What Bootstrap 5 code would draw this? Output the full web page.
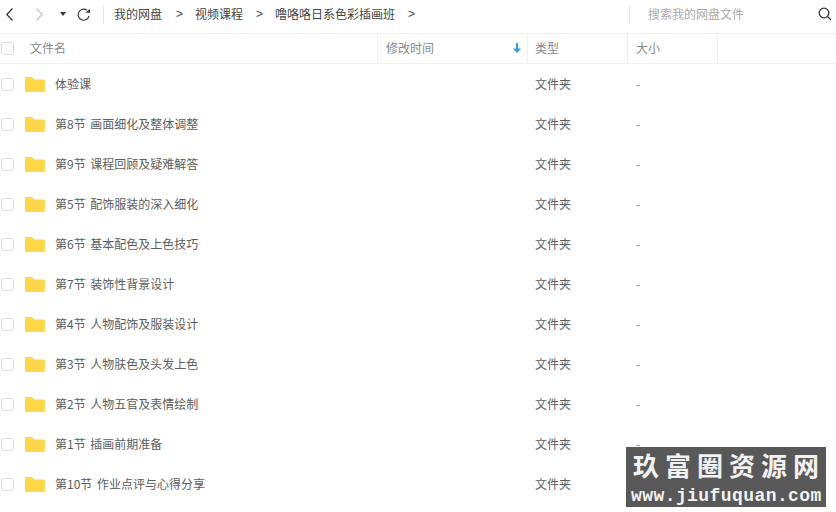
<!DOCTYPE html>
<html lang="zh">
<head>
<meta charset="utf-8">
<title>我的网盘</title>
<link href="https://cdn.jsdelivr.net/npm/bootstrap@5.3.0/dist/css/bootstrap.min.css" rel="stylesheet">
<style>
html,body{height:512px;overflow:hidden;background:#fff}
body{font-family:"Noto Sans CJK SC","Liberation Sans",sans-serif;font-size:12px;color:#5c5c5c;position:relative}
.topbar{height:34px;border-bottom:1px solid #f0f0f0;padding-bottom:5px}
.back-wrap{padding-left:6px}
.gap-fwd{margin-left:23px}
.gap-drop{margin-left:17px}
.gap-ref{margin-left:11px;margin-right:13px}
.tb-sep{width:1px;height:17px;background:#e6e6e6;flex:none}
.crumbs{color:#444;padding-left:10px}
.crumb-gt{font-family:"Liberation Sans",sans-serif;color:#444;margin-right:12px}
.crumb-name{margin-right:14px}
.crumb-last{margin-right:13px}
.search-zone{width:206px}
.search-txt{color:#aaa;padding-left:18px}
.headrow{height:30px;border-bottom:1px solid #f0f0f0;color:#888}
.col-name,.col-time,.col-type,.col-size{height:100%;padding-bottom:2px;border-right:1px solid #eee}
.col-name{width:378px;padding-left:30px}
.col-time{width:150px;padding-left:8px;padding-right:6px}
.col-type{width:100px;padding-left:7px}
.col-size{width:90px;padding-left:8px}
.listrow{height:40px}
.cell-name{width:378px;padding-left:25px;gap:10px;word-spacing:2px}
.cell-time{width:150px}
.cell-type{width:100px;padding-left:7px}
.cell-size{width:90px;padding-left:8px;color:#888}
.chk{width:13px;height:13px;margin:0;border:1px solid #dcdcdc;border-radius:3px;background:#fff;flex:none}
.chk-at{position:absolute;left:1px}
.rel{position:relative}
.stamp{position:absolute;left:626px;top:447px;width:200px;height:60px;background:#585858;color:#f2f2f2}
.stamp-cn{font-family:"Noto Sans CJK SC",serif;font-weight:700;font-size:26px;line-height:36px;height:37px;letter-spacing:6px;padding-left:7px;white-space:nowrap}
.stamp-url{font-family:"Liberation Mono",monospace;font-weight:700;font-size:18px;line-height:24px;letter-spacing:.42px;padding-left:5px;white-space:nowrap}
</style>
</head>
<body>
<div class="topbar d-flex align-items-center">
  <div class="back-wrap d-flex align-items-center flex-none">
    <svg width="7" height="13" viewBox="0 0 7 13" fill="none" stroke="#333" stroke-width="1.200"><path d="M6.500 .5 .8 6.500 6.500 12.500"/></svg>
    <svg class="gap-fwd" width="7" height="13" viewBox="0 0 7 13" fill="none" stroke="#c4c4c4" stroke-width="1.200"><path d="M.5 .5 6.200 6.500 .5 12.500"/></svg>
    <svg class="gap-drop" width="6" height="4" viewBox="0 0 6 4" fill="#333"><path d="M0 0h6L3 4z"/></svg>
    <svg class="gap-ref" width="13" height="13" viewBox="0 0 13 13" fill="none" stroke="#333" stroke-width="1.100"><path d="M12 8A5.500 5.500 0 1 1 10 2.300"/><path d="M8.500 4.800H13V.8z" fill="#333" stroke="none"/></svg>
  </div>
  <div class="tb-sep"></div>
  <div class="crumbs d-flex flex-grow-1 align-items-center">
    <span class="crumb-name">我的网盘</span><span class="crumb-gt">&gt;</span>
    <span class="crumb-name crumb-last">视频课程</span><span class="crumb-gt">&gt;</span>
    <span class="crumb-name crumb-last">噜咯咯日系色彩插画班</span><span class="crumb-gt">&gt;</span>
  </div>
  <div class="tb-sep"></div>
  <div class="search-zone d-flex align-items-center justify-content-between pe-1">
    <span class="search-txt">搜索我的网盘文件</span>
    <svg width="14" height="14" viewBox="0 0 14 14" fill="none" stroke="#333" stroke-width="1.300"><circle cx="6" cy="6" r="4.800"/><path d="M9.500 9.500 13 13"/></svg>
  </div>
</div>
<div class="headrow d-flex align-items-center rel">
  <input class="chk chk-at form-check-input" type="checkbox" aria-label="全选">
  <div class="col-name d-flex align-items-center">文件名</div>
  <div class="col-time d-flex align-items-center justify-content-between">修改时间
    <svg width="8" height="10" viewBox="0 0 8 10" fill="#2aa4e4"><path d="M3 0h2v5.500h3L4 10 0 5.500h3z"/></svg></div>
  <div class="col-type d-flex align-items-center">类型</div>
  <div class="col-size d-flex align-items-center">大小</div>
</div>
<div id="list"></div>
<div class="stamp">
  <div class="stamp-cn">玖富圈资源网</div>
  <div class="stamp-url">www.jiufuquan.com</div>
</div>
<script>
var names=["体验课","第8节 画面细化及整体调整","第9节 课程回顾及疑难解答","第5节 配饰服装的深入细化","第6节 基本配色及上色技巧","第7节 装饰性背景设计","第4节 人物配饰及服装设计","第3节 人物肤色及头发上色","第2节 人物五官及表情绘制","第1节 插画前期准备","第10节 作业点评与心得分享"];
document.getElementById('list').innerHTML=names.map(function(n){
return '<div class="listrow d-flex align-items-center rel">'+
'<input class="chk chk-at form-check-input" type="checkbox" aria-label="选择">'+
'<div class="cell-name d-flex align-items-center">'+
'<svg width="20" height="15" viewBox="0 0 20 15"><path d="M0 1.500Q0 0 1.500 0H7L9.500 2.500H18.500Q20 2.500 20 4V13.500Q20 15 18.500 15H1.500Q0 15 0 13.500Z" fill="#ffd648"/></svg>'+
'<span>'+n+'</span></div>'+
'<div class="cell-time"></div><div class="cell-type">文件夹</div><div class="cell-size">-</div></div>';
}).join('');
</script>
<script src="https://cdn.jsdelivr.net/npm/bootstrap@5.3.0/dist/js/bootstrap.bundle.min.js"></script>
</body>
</html>
